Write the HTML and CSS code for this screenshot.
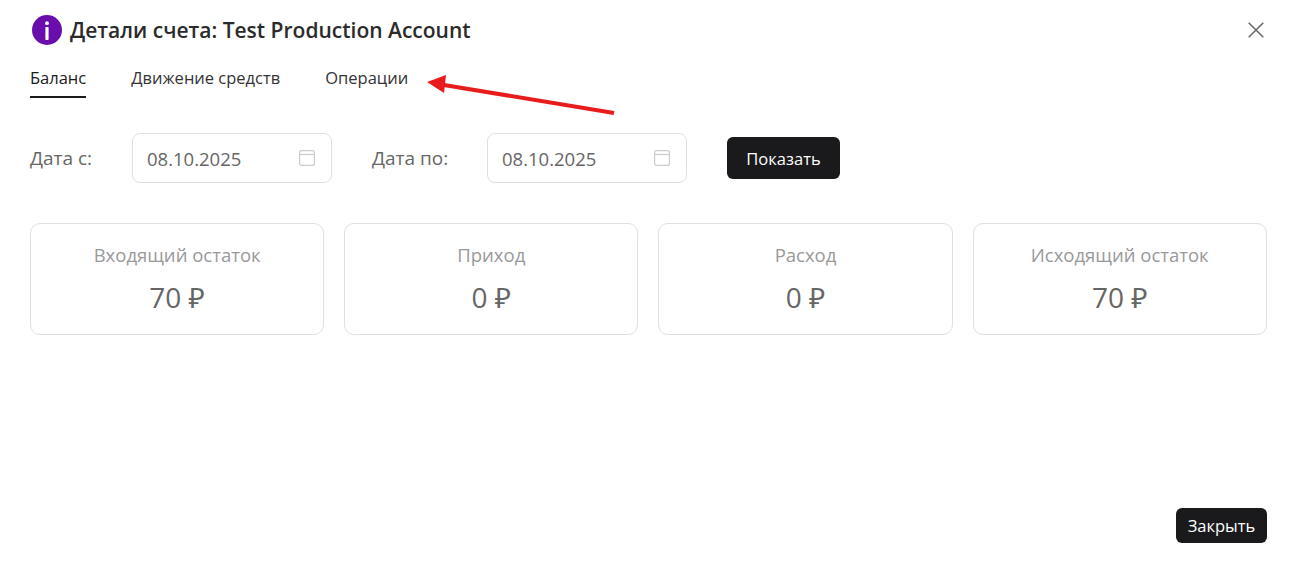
FILE: index.html
```html
<!DOCTYPE html>
<html lang="ru">
<head>
  <meta charset="UTF-8">
  <title>Детали счета</title>
  <meta name="viewport" content="width=device-width, initial-scale=1.0">
  <link rel="stylesheet" href="styles.css">
</head>
<body>
  <div class="modal">

    <!-- Заголовок -->
    <div class="modal-header">
      <h1 class="modal-title">
        <svg class="info-icon" viewBox="0 0 30 30" width="30" height="30">
          <circle cx="15" cy="15" r="15" fill="#6a0dad"/>
          <circle cx="15" cy="8.2" r="1.9" fill="#fff"/>
          <rect x="13.4" y="12" width="3.2" height="13" rx="0.8" fill="#fff"/>
        </svg>
        Детали счета: Test Production Account
      </h1>
      <button class="close-button" aria-label="Закрыть">
        <svg viewBox="0 0 16 16" width="16" height="16">
          <path d="M0.7 0.7L15.3 15.3M15.3 0.7L0.7 15.3" stroke="#666" stroke-width="1.5" fill="none"/>
        </svg>
      </button>
    </div>

    <!-- Вкладки -->
    <div class="tabs">
      <a class="tab active">Баланс</a>
      <a class="tab">Движение средств</a>
      <a class="tab">Операции</a>
    </div>

    <!-- Фильтр -->
    <div class="filter">
      <label class="filter-label label-from">Дата с:</label>
      <div class="date-input">
        <span>08.10.2025</span>
        <svg viewBox="0 0 16 16" width="16" height="16">
          <rect x="0.6" y="0.6" width="14.8" height="14.8" rx="2" fill="none" stroke="#ccc" stroke-width="1.2"/>
          <path d="M0.6 4.5H15.4" stroke="#ccc" stroke-width="1.2"/>
        </svg>
      </div>
      <label class="filter-label label-to">Дата по:</label>
      <div class="date-input">
        <span>08.10.2025</span>
        <svg viewBox="0 0 16 16" width="16" height="16">
          <rect x="0.6" y="0.6" width="14.8" height="14.8" rx="2" fill="none" stroke="#ccc" stroke-width="1.2"/>
          <path d="M0.6 4.5H15.4" stroke="#ccc" stroke-width="1.2"/>
        </svg>
      </div>
      <button class="dark-button show-button">Показать</button>
    </div>

    <!-- Карточки -->
    <div class="cards">
      <div class="card">
        <div class="card-label">Входящий остаток</div>
        <div class="card-value">70 ₽</div>
      </div>
      <div class="card">
        <div class="card-label">Приход</div>
        <div class="card-value">0 ₽</div>
      </div>
      <div class="card">
        <div class="card-label">Расход</div>
        <div class="card-value">0 ₽</div>
      </div>
      <div class="card">
        <div class="card-label">Исходящий остаток</div>
        <div class="card-value">70 ₽</div>
      </div>
    </div>

    <div class="modal-footer">
      <button class="dark-button close-action">Закрыть</button>
    </div>
  </div>

  <!-- Стрелка поверх окна -->
  <svg class="arrow" viewBox="0 0 1297 562" width="1297" height="562">
    <path d="M614 113L444 85" stroke="#e81c1c" stroke-width="4" fill="none"/>
    <path d="M427 82L446 75L444 93Z" fill="#e81c1c"/>
  </svg>
</body>
</html>
```

FILE: styles.css
```css
/* Grundlayout */
body {
  margin: 0;
  background: #fff;
  font-family: "Open Sans", "Noto Sans", sans-serif;
  color: #222;
  overflow: hidden;
}
.modal {
  display: flex;
  flex-direction: column;
  height: 562px;
  box-sizing: border-box;
  padding: 14px 30px 19px 30px;
}

/* Header */
.modal-header {
  display: flex;
  align-items: center;
  justify-content: space-between;
  height: 32px;
}
.modal-title {
  display: flex;
  align-items: center;
  gap: 8px;
  margin: 0 0 0 2px;
  font-size: 21px;
  font-weight: 600;
  line-height: 30px;
  color: #2b2b2b;
}
.info-icon {
  margin-top: -1px;
}
.close-button {
  display: flex;
  padding: 0;
  margin-right: 3px;
  background: none;
  border: none;
  cursor: pointer;
}

/* Tabs */
.tabs {
  display: flex;
  gap: 45px;
  margin-top: 12px;
}
.tab {
  padding: 9px 0 7px;
  font-size: 16.5px;
  line-height: 22px;
  color: #333;
  border-bottom: 2px solid transparent;
}
.tab.active {
  color: #1a1a1c;
  border-bottom-color: #1a1a1c;
}

/* Filter */
.filter {
  display: flex;
  align-items: center;
  margin-top: 35px;
}
.filter-label {
  font-size: 19px;
  color: #666;
}
.label-from { width: 102px; }
.label-to { width: 115px; margin-left: 40px; }
.date-input {
  display: flex;
  align-items: center;
  justify-content: space-between;
  box-sizing: border-box;
  width: 200px;
  height: 50px;
  padding: 0 16px 0 14px;
  font-size: 18.5px;
  color: #666;
  border: 1px solid #e0e0e0;
  border-radius: 8px;
}
.dark-button {
  font-family: inherit;
  color: #fff;
  background: #1a1a1c;
  border: none;
  border-radius: 6px;
  cursor: pointer;
}
.show-button {
  width: 113px;
  height: 42px;
  margin-left: 40px;
  font-size: 16.5px;
}

/* Cards */
.cards {
  display: grid;
  grid-template-columns: repeat(4, 1fr);
  gap: 20px;
  margin: 40px 0.2px 0 0;
}
.card {
  box-sizing: border-box;
  height: 112px;
  padding: 18px 10px 0;
  text-align: center;
  border: 1px solid #e0e0e0;
  border-radius: 10px;
}
.card-label {
  font-size: 18.5px;
  line-height: 26px;
  color: #999;
}
.card-value {
  margin-top: 10px;
  font-size: 28px;
  line-height: 38px;
  color: #666;
}

/* Footer */
.modal-footer {
  display: flex;
  justify-content: flex-end;
  margin-top: auto;
}
.close-action {
  width: 91px;
  height: 35px;
  font-size: 16.5px;
}

.arrow {
  position: absolute;
  top: 0;
  left: 0;
  pointer-events: none;
}
```
